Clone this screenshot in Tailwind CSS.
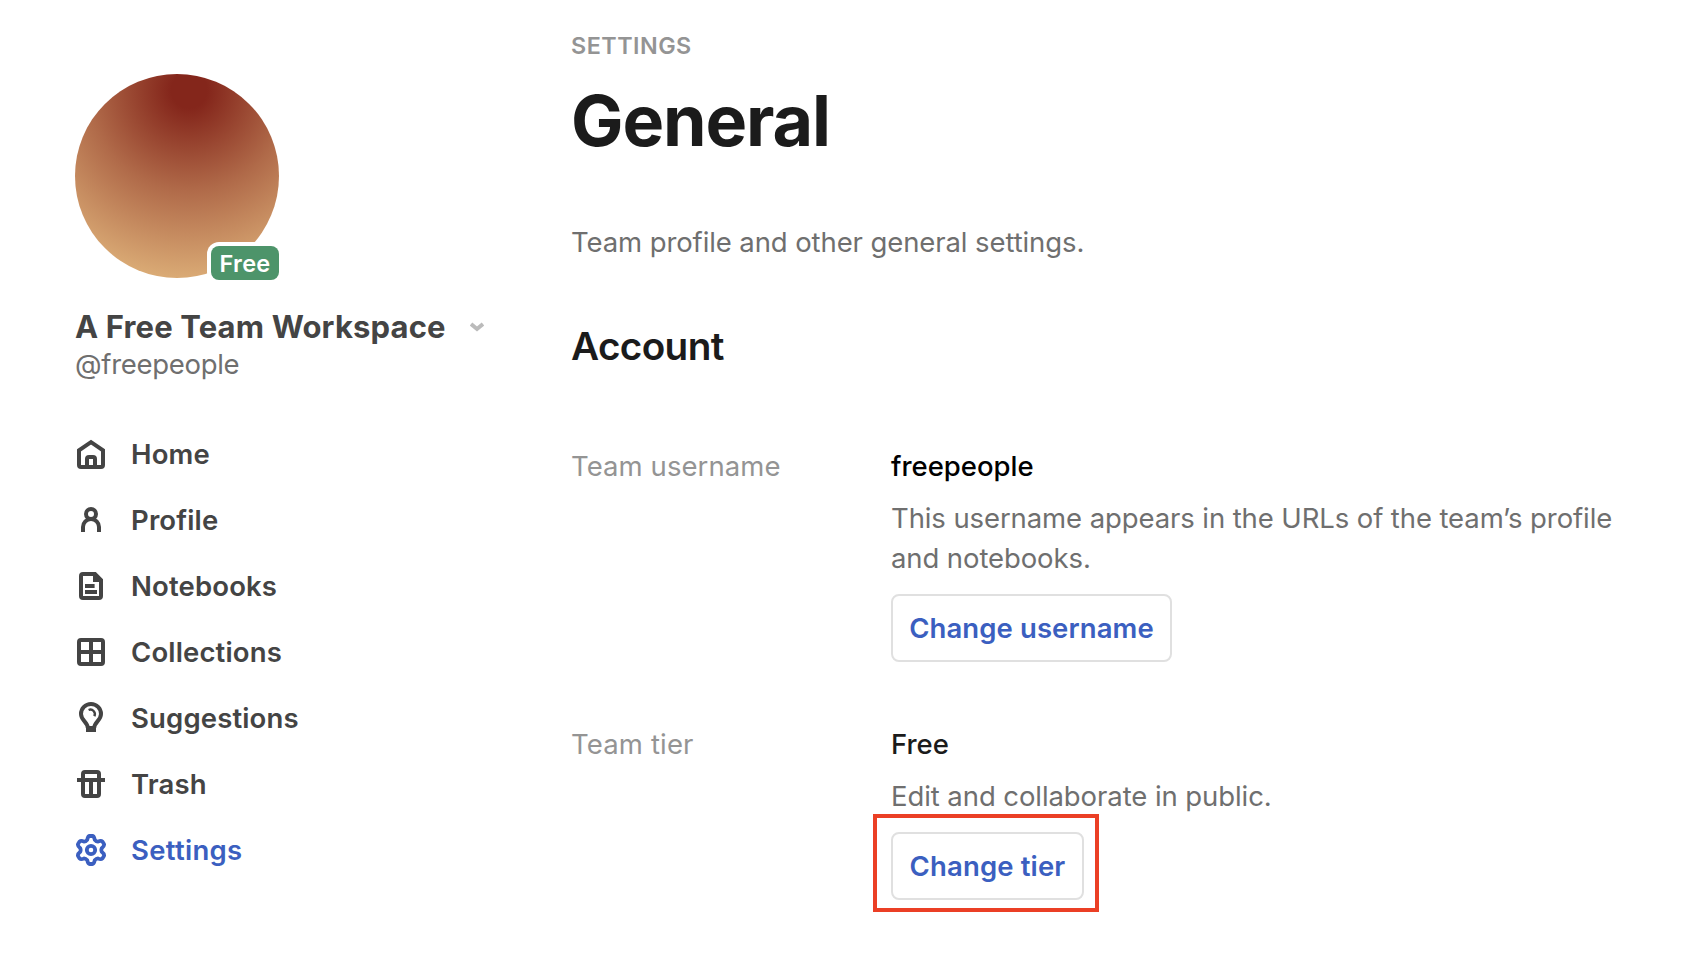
<!DOCTYPE html>
<html lang="en">
<head>
<meta charset="utf-8">
<title>Settings</title>
<script src="https://cdn.jsdelivr.net/npm/@tailwindcss/browser@4"></script>
</head>
<body class="bg-white font-['Inter',sans-serif] text-[27.5px]">
<div class="flex h-[970px] w-[1694px] overflow-hidden">
  <aside class="w-[571px] shrink-0 pl-[75px] pt-[74px]">
    <div class="relative size-[204px]">
      <div class="size-[204px] rounded-full bg-[radial-gradient(circle_at_56%_8%,#84261b_0,#84261b_18px,#b06a49_100px,#dbac76_190px)]"></div>
      <span class="absolute -bottom-[2px] right-0 flex h-[34px] w-[68px] items-center justify-center rounded-lg bg-[#4d946a] pt-[2px] text-[23.5px] font-semibold tracking-[0.3px] text-white shadow-[0_0_0_4px_white]">Free</span>
    </div>
    <div class="mt-[29px] flex h-10 items-center text-[31px] font-bold tracking-[0.15px] text-[#444]">
      <span>A Free Team Workspace</span>
      <svg class="ml-6 h-3 w-[14px] text-[#bbb]" viewBox="0 0 14 12" fill="none" stroke="currentColor" stroke-width="4"><path d="M1 3l6 5 6-5"/></svg>
    </div>
    <div class="h-9 leading-[34px] tracking-[-0.3px] text-[#6f6f6f]">@freepeople</div>
    <nav class="mt-[38px] font-semibold tracking-[0.15px] text-[#444]">
      <a class="flex h-[66px] items-center gap-6"><svg class="size-8" viewBox="0 0 16 16" fill="none" stroke="currentColor" stroke-width="2"><path d="M2 13.5V6.2L8 2.1l6 4.1v7.3a1 1 0 0 1-1 1H3a1 1 0 0 1-1-1zM6 14.5v-4a1 1 0 0 1 1-1h2a1 1 0 0 1 1 1v4"/></svg><span class="pt-[2px]">Home</span></a>
      <a class="flex h-[66px] items-center gap-6"><svg class="size-8" viewBox="0 0 16 16" fill="none" stroke="currentColor" stroke-width="2"><circle cx="8" cy="5" r="2.5"/><path d="M4 14v-2.500a4 4 0 0 1 8 0V14"/></svg><span class="pt-[2px]">Profile</span></a>
      <a class="flex h-[66px] items-center gap-6"><svg class="size-8" viewBox="0 0 16 16" fill="none" stroke="currentColor" stroke-width="2"><path d="M3 3a1 1 0 0 1 1-1h6l3 3v8a1 1 0 0 1-1 1H4a1 1 0 0 1-1-1zM5 8h4.8M5 11h6"/><path d="M9 2v4h4V4.600L10.400 2z" fill="currentColor" stroke="none"/></svg><span class="pt-[2px]">Notebooks</span></a>
      <a class="flex h-[66px] items-center gap-6"><svg class="size-8" viewBox="0 0 16 16" fill="none" stroke="currentColor" stroke-width="2"><rect x="2" y="2" width="12" height="12" rx="1"/><path d="M8 2v12M2 8h12"/></svg><span class="pt-[2px]">Collections</span></a>
      <a class="flex h-[66px] items-center gap-6"><svg class="size-8" viewBox="0 0 16 16" fill="none" stroke="currentColor" stroke-width="2"><path d="M6.400 13c0-3-3.400-3.700-3.400-7a5 5 0 0 1 10 0c0 3.300-3.400 4-3.400 7"/><path d="M5.500 12h5v3h-5z" fill="currentColor" stroke="none"/><path d="M6.800 4c1.900-.8 3.800 1.100 2.900 3.100" stroke-width="1.200"/></svg><span class="pt-[2px]">Suggestions</span></a>
      <a class="flex h-[66px] items-center gap-6"><svg class="size-8" viewBox="0 0 16 16" fill="none" stroke="currentColor" stroke-width="2"><rect x="4" y="2" width="8" height="12" rx="1"/><path d="M1 6h14M8 6v8"/></svg><span class="pt-[2px]">Trash</span></a>
      <a class="flex h-[66px] items-center gap-6 tracking-[0.3px] text-[#3b5fc0]"><svg class="size-8" viewBox="0 0 16 16" fill="none" stroke="currentColor" stroke-width="1.900" stroke-linejoin="round"><circle cx="8" cy="8" r="2.100"/><path d="M6.100 2.900Q6.500 1 7.300 1h1.400Q9.500 1 9.900 2.900q.7.900 1.570.9 1.500-.7 2.300 0l.7 1.200q.4.900-1.100 2.100-.4.900 0 1.800 1.500 1.200 1.100 2.100l-.7 1.200q-.8.700-2.300 0-.87 0-1.570.9Q9.500 15 8.700 15H7.300q-.8 0-1.200-1.900-.7-.9-1.570-.9-1.500.7-2.300 0l-.7-1.200q-.4-.9 1.100-2.100.4-.9 0-1.800-1.500-1.200-1.100-2.100l.7-1.200q.8-.7 2.300 0 .87 0 1.570-.9z"/></svg><span class="pt-[2px]">Settings</span></a>
    </nav>
  </aside>
  <main class="flex-1 pt-[30px]">
    <div class="h-8 text-[23.3px] font-semibold leading-8 tracking-[0.5px] text-[#949494]">SETTINGS</div>
    <h1 class="mt-[19px] h-20 text-[70px] font-bold leading-[80px] tracking-[-1.1px] text-[#1b1b1b]">General</h1>
    <p class="mt-[61px] h-10 leading-10 tracking-[-0.1px] text-[#6f6f6f]">Team profile and other general settings.</p>
    <h2 class="mt-[60px] h-12 text-[38.7px] font-semibold leading-[48px] tracking-[-0.65px] text-[#1b1b1b]">Account</h2>
    <dl class="mt-[76px] grid grid-cols-[320px_760px] gap-y-[62px] leading-10">
      <dt class="tracking-[0.08px] text-[#949494]">Team username</dt>
      <dd class="text-[#6f6f6f]">
        <div class="mb-3 font-medium text-black">freepeople</div>
        <p class="tracking-[-0.1px]">This username appears in the URLs of the team’s profile<br>and notebooks.</p>
        <button class="mt-4 block h-[68px] w-[281px] rounded-lg border-2 border-[#e0e0e0] font-semibold tracking-[0.1px] text-[#3b5fc0]">Change username</button>
      </dd>
      <dt class="tracking-[0.15px] text-[#949494]">Team tier</dt>
      <dd class="text-[#6f6f6f]">
        <div class="mb-3 font-medium text-[#1b1b1b]">Free</div>
        <p class="tracking-[-0.08px]">Edit and collaborate in public.</p>
        <div class="-ml-[18px] -mt-[2px] h-[98px] w-[226px] border-4 border-[#eb3f25] p-[14px]">
          <button class="block h-[68px] w-[193px] rounded-lg border-2 border-[#e0e0e0] font-semibold tracking-[0.15px] text-[#3b5fc0]">Change tier</button>
        </div>
      </dd>
    </dl>
  </main>
</div>
</body>
</html>
